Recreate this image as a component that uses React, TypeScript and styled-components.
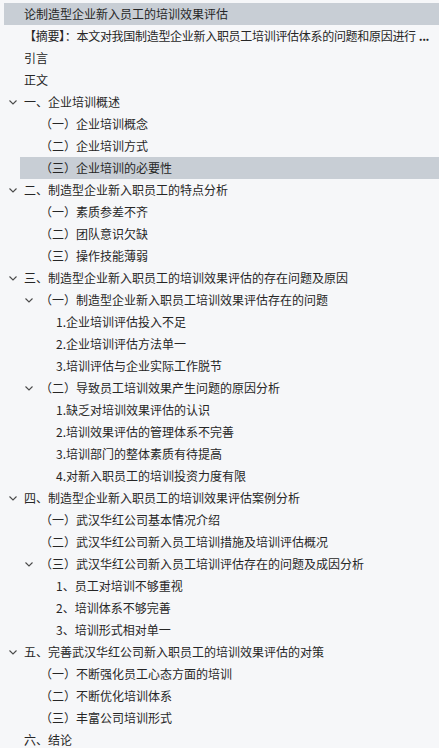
import React from 'react'
import styled, { createGlobalStyle } from 'styled-components'

const GlobalStyle = createGlobalStyle`
    html, body {
        margin: 0;
        padding: 0;
        background: #f6f7f9;
    }

    body {
        font-family: 'Noto Sans CJK SC', 'Noto Sans', sans-serif;
        color: #262626;
    }
`

type Item = {
    text: string
    level: number
    open?: boolean
    active?: boolean
    // the abstract line is shown cut short with a trailing "..."
    truncated?: boolean
}

const items: Item[] = [
    { text: '论制造型企业新入员工的培训效果评估', level: 0, active: true },
    {
        text: '【摘要】：本文对我国制造型企业新入职员工培训评估体系的问题和原因进行',
        level: 0,
        truncated: true,
    },
    { text: '引言', level: 0 },
    { text: '正文', level: 0 },
    { text: '一、企业培训概述', level: 0, open: true },
    { text: '（一）企业培训概念', level: 1 },
    { text: '（二）企业培训方式', level: 1 },
    { text: '（三）企业培训的必要性', level: 1, active: true },
    { text: '二、制造型企业新入职员工的特点分析', level: 0, open: true },
    { text: '（一）素质参差不齐', level: 1 },
    { text: '（二）团队意识欠缺', level: 1 },
    { text: '（三）操作技能薄弱', level: 1 },
    { text: '三、制造型企业新入职员工的培训效果评估的存在问题及原因', level: 0, open: true },
    { text: '（一）制造型企业新入职员工培训效果评估存在的问题', level: 1, open: true },
    { text: '1.企业培训评估投入不足', level: 2 },
    { text: '2.企业培训评估方法单一', level: 2 },
    { text: '3.培训评估与企业实际工作脱节', level: 2 },
    { text: '（二）导致员工培训效果产生问题的原因分析', level: 1, open: true },
    { text: '1.缺乏对培训效果评估的认识', level: 2 },
    { text: '2.培训效果评估的管理体系不完善', level: 2 },
    { text: '3.培训部门的整体素质有待提高', level: 2 },
    { text: '4.对新入职员工的培训投资力度有限', level: 2 },
    { text: '四、制造型企业新入职员工的培训效果评估案例分析', level: 0, open: true },
    { text: '（一）武汉华红公司基本情况介绍', level: 1 },
    { text: '（二）武汉华红公司新入员工培训措施及培训评估概况', level: 1 },
    { text: '（三）武汉华红公司新入员工培训评估存在的问题及成因分析', level: 1, open: true },
    { text: '1、员工对培训不够重视', level: 2 },
    { text: '2、培训体系不够完善', level: 2 },
    { text: '3、培训形式相对单一', level: 2 },
    { text: '五、完善武汉华红公司新入职员工的培训效果评估的对策', level: 0, open: true },
    { text: '（一）不断强化员工心态方面的培训', level: 1 },
    { text: '（二）不断优化培训体系', level: 1 },
    { text: '（三）丰富公司培训形式', level: 1 },
    { text: '六、结论', level: 0 },
]

const Outline = styled.nav`
    width: 439px;
    height: 748px;
    overflow: hidden;
    padding-top: 3px;
    box-sizing: border-box;
    display: flex;
    flex-direction: column;
`

const Row = styled.div<{ $level: number; $active?: boolean }>`
    position: relative;
    height: 22px;
    margin-left: ${(props) => 4 + props.$level * 16}px;
    padding: 0 2px 0 20px;

    display: flex;
    align-items: center;

    background-color: ${(props) => (props.$active ? '#c8ced5' : 'transparent')};

    font-size: 12px;
    line-height: 22px;
    white-space: nowrap;
    cursor: default;
`

const Label = styled.span<{ $tight?: boolean }>`
    min-width: 0;
    letter-spacing: ${(props) => (props.$tight ? '-0.3px' : 'normal')};
`

const More = styled.span`
    margin-left: 3px;
    font-weight: 700;
    letter-spacing: -0.5px;
`

// the caret sits over the left padding of the row
const Caret = styled.svg`
    position: absolute;
    left: 5px;
    top: 9px;
    width: 8px;
    height: 5px;
    overflow: visible;
`

export default function App() {
    return (
        <>
            <GlobalStyle />
            <Outline>
                {items.map((item, index) => (
                    <Row key={index} $level={item.level} $active={item.active}>
                        {item.open && (
                            <Caret viewBox="0 0 8 5">
                                <polyline
                                    points="0.5,0.5 4,4 7.5,0.5"
                                    fill="none"
                                    stroke="#4a4a4a"
                                    strokeWidth="1.1"
                                />
                            </Caret>
                        )}
                        <Label $tight={item.truncated}>{item.text}</Label>
                        {item.truncated && <More>...</More>}
                    </Row>
                ))}
            </Outline>
        </>
    )
}
